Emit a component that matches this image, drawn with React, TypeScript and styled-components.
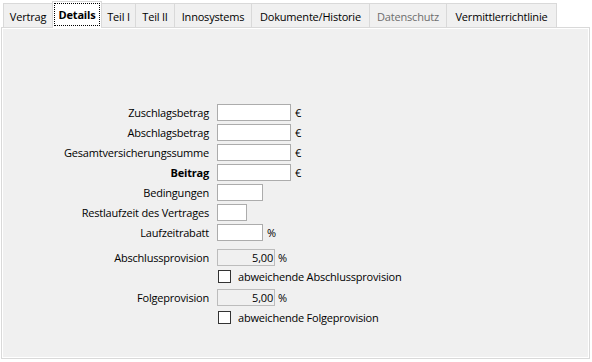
import React, { FC, ReactElement } from 'react';
import styled, { createGlobalStyle } from 'styled-components';

const GlobalStyle = createGlobalStyle`
  html, body {
    margin: 0;
    background: #ffffff;
  }
  body {
    font-family: "Open Sans", "Noto Sans", sans-serif;
    font-size: 11px;
    letter-spacing: -0.2px;
    color: #000000;
  }
`;

const Wrapper = styled.div`
  width: 592px;
  height: 362px;
  padding: 3px 2px 0 1px;
  box-sizing: border-box;
`;

const TabBar = styled.div`
  display: flex;
  height: 24px;
  padding-left: 2px;
  position: relative;
  z-index: 1;
`;

const Tab = styled.div<{ $w: number; $active?: boolean; $disabled?: boolean }>`
  width: ${p => p.$w}px;
  box-sizing: border-box;
  margin-left: -1px;
  border: 1px solid #d9d9d9;
  border-bottom: none;
  background: ${p => (p.$active ? '#ffffff' : '#f0f0f0')};
  color: ${p => (p.$disabled ? '#6d6d6d' : '#000000')};
  font-weight: ${p => (p.$active ? 700 : 400)};
  display: flex;
  align-items: center;
  justify-content: center;
  height: ${p => (p.$active ? '27px' : '24px')};
  margin-top: ${p => (p.$active ? '-2px' : '0')};
  padding: ${p => (p.$active ? '1px 1px 2px' : '1px 0 0')};
  white-space: nowrap;

  &:first-child {
    margin-left: 0;
  }
`;

const Focus = styled.span`
  flex: 1;
  align-self: stretch;
  display: flex;
  align-items: center;
  justify-content: center;
  border: 1px dotted #000000;
`;

const Panel = styled.div`
  height: 332px;
  box-sizing: border-box;
  border: 1px solid #d9d9d9;
  background: #ffffff;
  padding: 1px;
`;

const Page = styled.div`
  height: 100%;
  background: #f0f0f0;
  padding-top: 75px;
  box-sizing: border-box;
  display: flex;
  flex-direction: column;
`;

const Row = styled.div<{ $top: number }>`
  display: grid;
  grid-template-columns: 206px auto;
  column-gap: 8px;
  align-items: center;
  height: 17px;
  margin-top: ${p => p.$top}px;
`;

const Label = styled.div<{ $bold?: boolean }>`
  text-align: right;
  font-weight: ${p => (p.$bold ? 700 : 400)};
  white-space: nowrap;
`;

const Field = styled.div<{ $gap?: number }>`
  display: flex;
  align-items: center;
  gap: ${p => p.$gap ?? 4}px;
`;

const Input = styled.div<{ $w: number; $disabled?: boolean }>`
  width: ${p => p.$w}px;
  height: 17px;
  box-sizing: border-box;
  border: 1px solid ${p => (p.$disabled ? '#bcbcbc' : '#acacac')};
  background: ${p => (p.$disabled ? '#f0f0f0' : '#ffffff')};
  text-align: right;
  padding-right: 1px;
  line-height: 15px;
`;

const Check = styled.span`
  width: 13px;
  height: 13px;
  box-sizing: border-box;
  border: 1px solid #333333;
  background: #ffffff;
  margin-left: 1px;
`;

const CheckText = styled.span`
  width: 164px;
  overflow: hidden;
  white-space: nowrap;
`;

const tabs = [
  { title: 'Vertrag', w: 50 },
  { title: 'Details', w: 50, active: true },
  { title: 'Teil I', w: 35 },
  { title: 'Teil II', w: 40 },
  { title: 'Innosystems', w: 78 },
  { title: 'Dokumente/Historie', w: 119 },
  { title: 'Datenschutz', w: 78, disabled: true },
  { title: 'Vermittlerrichtlinie', w: 111 },
];

const App: FC = (): ReactElement => (
  <Wrapper>
    <GlobalStyle />
    <TabBar>
      {tabs.map(t => (
        <Tab key={t.title} $w={t.w} $active={t.active} $disabled={t.disabled}>
          {t.active ? <Focus>{t.title}</Focus> : t.title}
        </Tab>
      ))}
    </TabBar>
    <Panel>
      <Page>
        <Row $top={0}>
          <Label>Zuschlagsbetrag</Label>
          <Field><Input $w={74} />€</Field>
        </Row>
        <Row $top={3}>
          <Label>Abschlagsbetrag</Label>
          <Field><Input $w={74} />€</Field>
        </Row>
        <Row $top={3}>
          <Label>Gesamtversicherungssumme</Label>
          <Field><Input $w={74} />€</Field>
        </Row>
        <Row $top={3}>
          <Label $bold>Beitrag</Label>
          <Field><Input $w={74} />€</Field>
        </Row>
        <Row $top={3}>
          <Label>Bedingungen</Label>
          <Field><Input $w={46} /></Field>
        </Row>
        <Row $top={3}>
          <Label>Restlaufzeit des Vertrages</Label>
          <Field><Input $w={30} /></Field>
        </Row>
        <Row $top={3}>
          <Label>Laufzeitrabatt</Label>
          <Field><Input $w={46} />%</Field>
        </Row>
        <Row $top={8}>
          <Label>Abschlussprovision</Label>
          <Field $gap={3}><Input $w={58} $disabled>5,00</Input>%</Field>
        </Row>
        <Row $top={2}>
          <span />
          <Field $gap={7}><Check /><CheckText>abweichende Abschlussprovision</CheckText></Field>
        </Row>
        <Row $top={4}>
          <Label>Folgeprovision</Label>
          <Field $gap={3}><Input $w={58} $disabled>5,00</Input>%</Field>
        </Row>
        <Row $top={3}>
          <span />
          <Field $gap={7}><Check /><CheckText>abweichende Folgeprovision</CheckText></Field>
        </Row>
      </Page>
    </Panel>
  </Wrapper>
);

export default App;
